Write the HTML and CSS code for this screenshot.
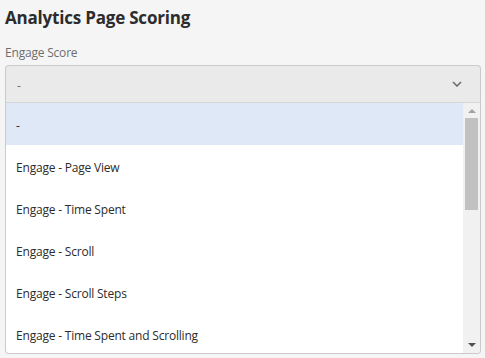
FILE: index.html
```html
<!DOCTYPE html>
<html>
<head>
<meta charset="utf-8">
<link rel="stylesheet" href="styles.css">
</head>
<body>
<div class="page">
  <h1 class="title">Analytics Page Scoring</h1>
  <div class="label">Engage Score</div>
  <div class="field">
    <div class="select">
      <span class="value">-</span>
      <svg class="chev" width="10" height="6" viewBox="0 0 10 6"><path d="M1 1 L5 5 L9 1" fill="none" stroke="#6e6e6e" stroke-width="1.6"/></svg>
    </div>
    <div class="list">
      <div class="items">
        <div class="item sel">-</div>
        <div class="item">Engage - Page View</div>
        <div class="item">Engage - Time Spent</div>
        <div class="item">Engage - Scroll</div>
        <div class="item">Engage - Scroll Steps</div>
        <div class="item">Engage - Time Spent and Scrolling</div>
      </div>
      <div class="scrollbar">
        <div class="arrow up"></div>
        <div class="track"><div class="thumb"></div></div>
        <div class="arrow down"></div>
      </div>
    </div>
  </div>
</div>
</body>
</html>
```

FILE: styles.css
```css
html, body { margin: 0; padding: 0; }
body {
  background: #f5f5f5;
  font-family: "Open Sans", "Liberation Sans", sans-serif;
  color: #2c2c2c;
  width: 485px;
  height: 358px;
  overflow: hidden;
}
.page { padding: 6px 4px 0 5px; }
.title {
  margin: 0;
  font-size: 17px;
  font-weight: 700;
  color: #2c2c2c;
  line-height: 24px;
  letter-spacing: -0.2px;
}
.label {
  margin-top: 15px;
  font-size: 12px;
  color: #6e6e6e;
  line-height: 16px;
  letter-spacing: -0.2px;
}
.field { margin-top: 4px; }
.select {
  height: 37px;
  background: #eaeaea;
  border: 1px solid #cacaca;
  border-bottom: none;
  border-radius: 4px 4px 0 0;
  display: flex;
  align-items: center;
  justify-content: space-between;
  padding: 3px 18px 0 11px;
  box-sizing: border-box;
}
.value { font-size: 12px; color: #6e6e6e; }
.chev { display: block; margin-top: -3px; }
.list {
  display: flex;
  background: #fff;
  border: 1px solid #cacaca;
  border-top: 1px solid #d6d6d6;
  border-radius: 0 0 4px 4px;
  height: 252px;
  box-sizing: border-box;
  overflow: hidden;
}
.items { flex: 1; }
.item {
  height: 38px;
  padding-top: 4px;
  line-height: 38px;
  padding-left: 10px;
  font-size: 12px;
  color: #2c2c2c;
  letter-spacing: -0.2px;
}
.item.sel { background: #dfe8f6; }
.scrollbar {
  width: 17px;
  background: #f1f1f1;
  display: flex;
  flex-direction: column;
  align-items: center;
}
.arrow { width: 0; height: 0; border-left: 4px solid transparent; border-right: 4px solid transparent; }
.arrow.up { border-bottom: 4px solid #a3a3a3; margin: 6px 0 5px; }
.arrow.down { border-top: 4px solid #505050; margin: 5px 0 6px; }
.track { flex: 1; width: 100%; display: flex; justify-content: center; }
.thumb { width: 13px; height: 92px; background: #c1c1c1; }
```
